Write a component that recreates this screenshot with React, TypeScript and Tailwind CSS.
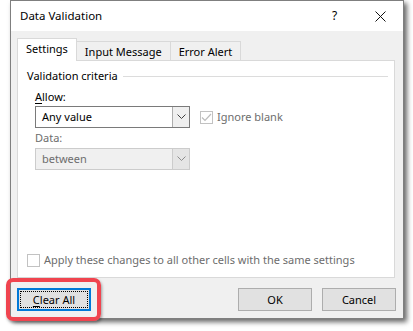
import { useState } from "react";

const tabs = ["Settings", "Input Message", "Error Alert"];

const Chevron = ({ color }: { color: string }) => (
  <svg width="9" height="6" viewBox="0 0 9 6">
    <polyline points="0.5,0.5 4.5,4.5 8.5,0.5" fill="none" stroke={color} strokeWidth="1" />
  </svg>
);

const Select = ({ value, disabled }: { value: string; disabled?: boolean }) => (
  <div
    className={
      disabled
        ? "flex h-[22px] w-[155px] border border-[#cccccc] bg-[#f0f0f0] text-[#6d6d6d]"
        : "flex h-[22px] w-[155px] border border-[#7a7a7a] bg-white text-black"
    }
  >
    <div className="flex flex-1 items-center pl-[6px]">{value}</div>
    <div
      className={
        disabled
          ? "flex w-[17px] items-center justify-center border-l border-[#cccccc] bg-[#e5e5e5]"
          : "flex w-[17px] items-center justify-center border-l border-[#adadad] bg-[#efefef]"
      }
    >
      <Chevron color={disabled ? "#8c8c8c" : "#404040"} />
    </div>
  </div>
);

const Checkbox = ({ checked }: { checked?: boolean }) => (
  <div className="flex h-[13px] w-[13px] items-center justify-center border border-[#c2c2c2] bg-white">
    {checked && (
      <svg width="11" height="9" viewBox="0 0 11 9">
        <polyline points="1,4.5 4,7.5 10,1" fill="none" stroke="#bcbcbc" strokeWidth="1.2" />
      </svg>
    )}
  </div>
);

const Button = ({ children, focused }: { children: React.ReactNode; focused?: boolean }) => (
  <div
    className={
      focused
        ? "flex h-[23px] w-[74px] items-center justify-center border-2 border-[#0078d7] bg-[#e1e1e1] p-[1px]"
        : "flex h-[23px] w-[74px] items-center justify-center border border-[#adadad] bg-[#e1e1e1]"
    }
  >
    {focused ? (
      <div className="flex h-full w-full items-center justify-center border border-dotted border-black">
        {children}
      </div>
    ) : (
      children
    )}
  </div>
);

export default function App() {
  const [active] = useState(0);

  return (
    <div
      className="relative h-[331px] w-[413px] overflow-hidden bg-white pl-[10px] text-[11px] leading-[16px] text-black"
      style={{ fontFamily: '"Segoe UI", "Noto Sans", sans-serif' }}
    >
      <div className="flex h-[319px] w-[394px] flex-col border border-[#7f7f7f] bg-[#f0f0f0] shadow-[3px_3px_5px_rgba(0,0,0,0.6)]">
        {/* title bar */}
        <div className="flex h-[30px] items-center bg-white">
          <div className="pl-[9px] text-[11.5px]">Data Validation</div>
          <div className="ml-auto flex h-full w-[45px] items-center justify-center text-[12px]">?</div>
          <div className="flex h-full w-[46px] items-center justify-center">
            <svg width="11" height="11" viewBox="0 0 11 11">
              <path d="M0.5 0.5 L10.5 10.5 M10.5 0.5 L0.5 10.5" stroke="#111" strokeWidth="1" />
            </svg>
          </div>
        </div>

        <div className="flex flex-1 flex-col px-[6px] pt-[7px]">
          {/* tabs */}
          <div className="flex h-[22px] items-end">
            {tabs.map((t, i) =>
              i === active ? (
                <div
                  key={t}
                  className="relative -mb-px flex h-[23px] items-center border border-b-0 border-[#d9d9d9] bg-white px-[8px] pb-[2px]"
                >
                  {t}
                </div>
              ) : (
                <div
                  key={t}
                  className="flex h-[19px] items-center border border-b-0 border-l-0 border-[#d9d9d9] bg-[#f0f0f0] px-[8px] pt-[1px]"
                >
                  {t}
                </div>
              )
            )}
          </div>

          {/* panel */}
          <div className="flex h-[218px] w-[378px] flex-col border border-[#d9d9d9] bg-white pl-[9px] pr-[6px] pt-[7px] pb-[9px]">
            <div className="flex h-[16px] items-center gap-[5px]">
              <span>Validation criteria</span>
              <div className="h-px flex-1 bg-[#dcdcdc]" />
            </div>

            <div className="flex flex-col pl-[8px]">
              <div className="mt-[5px] h-[16px]">
                <u className="underline-offset-2">A</u>llow:
              </div>
              <div className="mt-[1px] flex items-center gap-[10px]">
                <Select value="Any value" />
                <div className="flex items-center gap-[4px] text-[#6d6d6d]">
                  <Checkbox checked />
                  <span>Ignore blank</span>
                </div>
              </div>
              <div className="mt-[2px] h-[16px] text-[#6d6d6d]">Data:</div>
              <div className="mt-[2px]">
                <Select value="between" disabled />
              </div>
            </div>

            <div className="flex-1" />

            <div className="flex items-center gap-[4px] text-[#6d6d6d]">
              <Checkbox />
              <span>Apply these changes to all other cells with the same settings</span>
            </div>
          </div>

          {/* buttons */}
          <div className="mt-[10px] flex items-center">
            <Button focused>
              <span>
                <u className="underline-offset-2">C</u>lear All
              </span>
            </Button>
            <div className="ml-auto flex gap-[10px] pr-[1px]">
              <Button>OK</Button>
              <Button>Cancel</Button>
            </div>
          </div>
        </div>
      </div>

      {/* red highlight around Clear All */}
      <div className="absolute left-[6px] top-[278px] h-[43px] w-[95px] rounded-[7px] border-[4px] border-[#f0444f] shadow-[1px_2px_3px_rgba(0,0,0,0.35)]" />
    </div>
  );
}
